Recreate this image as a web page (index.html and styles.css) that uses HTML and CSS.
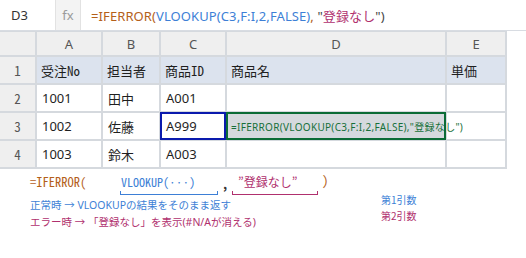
FILE: index.html
```html
<!DOCTYPE html>
<html lang="ja">
<head>
<meta charset="utf-8">
<link rel="stylesheet" href="styles.css">
</head>
<body>
<div class="fbar">
  <div class="namebox">D3</div>
  <div class="fx">fx</div>
  <div class="formula"><span class="ftext"><span class="c-if">=IFERROR(</span><span class="c-vl">VLOOKUP(C3,F:I,2,FALSE)</span><span class="c-if">,</span> <span class="c-dk">"</span><span class="c-str">登録なし</span><span class="c-dk">")</span></span></div>
</div>
<div class="sheet">
  <div class="corner"></div>
  <div class="colh">A</div><div class="colh">B</div><div class="colh">C</div><div class="colh">D</div><div class="colh">E</div>

  <div class="rowh">1</div>
  <div class="cell head">受注No</div><div class="cell head">担当者</div><div class="cell head">商品ID</div><div class="cell head">商品名</div><div class="cell head">単価</div>

  <div class="rowh">2</div>
  <div class="cell">1001</div><div class="cell">田中</div><div class="cell">A001</div><div class="cell"></div><div class="cell"></div>

  <div class="rowh">3</div>
  <div class="cell">1002</div><div class="cell">佐藤</div><div class="cell sel">A999</div><div class="cell fcell">=IFERROR(VLOOKUP(C3,F:I,2,FALSE),"登録なし")</div><div class="cell"></div>

  <div class="rowh">4</div>
  <div class="cell">1003</div><div class="cell">鈴木</div><div class="cell">A003</div><div class="cell"></div><div class="cell"></div>
</div>
<div class="notes">
  <div class="syntax">
    <span class="s-if">=IFERROR(</span>
    <div class="grp g1"><span class="s-vl">VLOOKUP(···)</span><div class="brk b-blue"></div></div>
    <span class="s-comma">,</span>
    <div class="grp g2"><span class="s-str">”登録なし”</span><div class="brk b-red"></div></div>
    <span class="s-close">)</span>
  </div>
  <div class="explain">
    <div class="lines">
      <div class="ln blue">正常時 → VLOOKUPの結果をそのまま返す</div>
      <div class="ln red">エラー時 → 「登録なし」を表示(#N/Aが消える)</div>
    </div>
    <div class="labels">
      <div class="lb blue">第1引数</div>
      <div class="lb red">第2引数</div>
    </div>
  </div>
</div>
</body>
</html>
```
FILE: styles.css
```css
html, body {
  margin: 0;
  padding: 0;
  background: #ffffff;
}
body {
  width: 526px;
  height: 258px;
  overflow: hidden;
  font-family: "Noto Sans", "Noto Sans CJK JP", sans-serif;
  color: #222;
}
.fbar {
  display: flex;
  height: 30px;
  border-bottom: 1px solid #d8dce2;
  font-size: 13px;
}
.namebox {
  width: 44px;
  padding-left: 11px;
  display: flex;
  align-items: center;
  border-right: 1px solid #e2e2e2;
  color: #333;
}
.fx {
  width: 24px;
  background: #f3f3f3;
  border-right: 1px solid #e2e2e2;
  color: #9a9a9a;
  display: flex;
  align-items: center;
  justify-content: center;
  font-size: 13px;
}
.formula {
  padding-left: 10px;
  display: flex;
  align-items: center;
  color: #444;
}
.ftext {
  white-space: pre;
  letter-spacing: 0.1px;
}
.c-if { color: #b4601a; }
.c-vl { color: #3d7fd6; }
.c-dk { color: #444; }
.c-str { color: #b0306e; font-family: "Noto Sans CJK JP", sans-serif; }

.sheet {
  display: grid;
  grid-template-columns: 35px 64px 56px 64px 218px 58px;
  grid-template-rows: 23px 26px 26px 26px 26px;
  gap: 2px;
  padding: 1px 2px 2px 0;
  width: 505px;
  background: #d5d9de;
}
.corner, .colh, .rowh {
  background: #efefef;
  color: #555;
  display: flex;
  align-items: center;
  justify-content: center;
}
.colh { font-size: 13px; }
.rowh {
  font-family: "Noto Sans Mono CJK JP", "DejaVu Sans Mono", monospace;
  font-size: 13px;
}
.cell {
  background: #fff;
  display: flex;
  align-items: center;
  padding-left: 5px;
  font-size: 13px;
  color: #1f1f1f;
  white-space: nowrap;
  font-family: "Noto Sans", "Noto Sans CJK JP", sans-serif;
}
.cell.head {
  background: #dce3ee;
  font-family: "Noto Sans Mono CJK JP", "Noto Sans CJK JP", monospace;
  padding-left: 4px;
}
.sel {
  outline: 2px solid #0a1aad;
  outline-offset: -1px;
}
.fcell {
  position: relative;
  z-index: 2;
  background: transparent;
  overflow: visible;
  outline: 2px solid #0b6b36;
  outline-offset: -1px;
  color: #17703a;
  font-size: 10px;
  padding-left: 4px;
  letter-spacing: 0.3px;
}
.notes {
  padding: 4px 0 0 30px;
}
.syntax {
  display: flex;
  align-items: flex-start;
  height: 24px;
  font-family: "Noto Sans Mono CJK JP", "DejaVu Sans Mono", monospace;
  font-size: 12.5px;
  line-height: 18px;
}
.s-if { color: #b4601a; width: 90px; }
.grp {
  display: flex;
  flex-direction: column;
  align-items: flex-start;
}
.g1 { width: 98px; }
.g2 { width: 86px; }
.s-vl { color: #3d7fd6; padding-left: 1px; font-size: 12px; }
.s-str { color: #b0306e; padding-left: 6px; font-size: 12px; }
.s-comma { color: #333; width: 10px; padding-left: 4px; font-weight: bold; margin-top: 2px; }
.s-close { color: #b4601a; padding-left: 4px; margin-top: -1px; font-size: 13px; }
.brk {
  height: 4px;
  width: 100%;
  box-sizing: border-box;
  border: 1px solid;
  border-top: none;
  margin-top: 0;
}
.b-blue { border-color: #3d7fd6; }
.b-red { border-color: #b0306e; }
.explain {
  display: flex;
  align-items: flex-start;
}
.lines {
  width: 351px;
}
.ln {
  font-size: 10.5px;
  line-height: 17px;
  font-family: "Noto Sans", "Noto Sans CJK JP", sans-serif;
}
.labels {
  margin-top: -5px;
}
.lb {
  font-size: 10px;
  line-height: 16px;
  font-family: "Noto Sans CJK JP", sans-serif;
}
.blue { color: #3d7fd6; }
.red { color: #b0306e; }
```
